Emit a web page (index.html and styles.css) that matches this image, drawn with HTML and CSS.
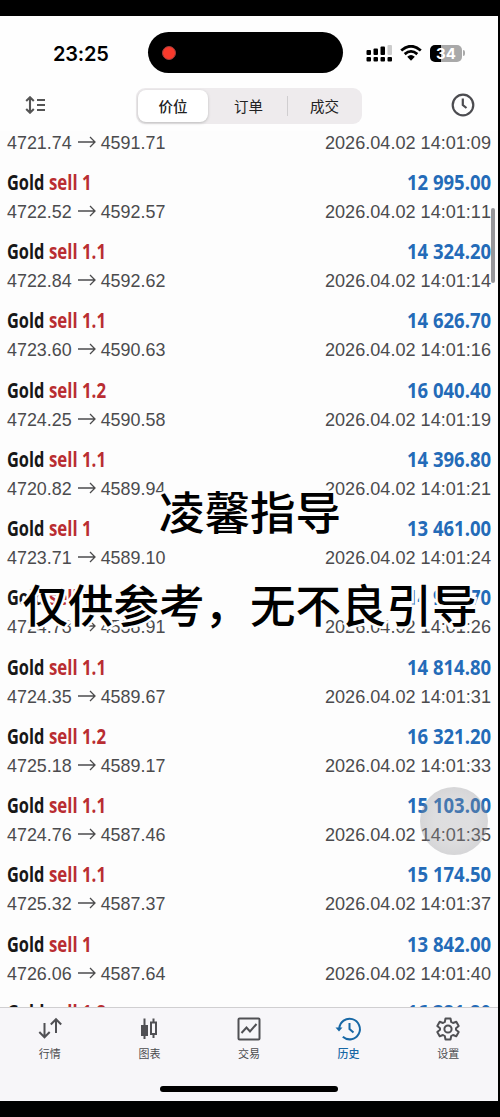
FILE: index.html
```
<!DOCTYPE html>
<html lang="zh-CN">
<head>
<meta charset="utf-8">
<title>历史</title>
<link rel="stylesheet" href="styles.css">
</head>
<body>
<div class="screen">
  <header class="status">
    <div class="time">23:25</div>
    <div class="island"><span class="rec"></span></div>
    <div class="signals">
      <svg class="cell" width="26" height="18" viewBox="0 0 26 18"><rect x="0.500" y="6" width="4.500" height="5" rx="1"/><rect x="7.500" y="4.500" width="4.500" height="6.500" rx="1"/><rect x="14.500" y="2.500" width="4.500" height="8.500" rx="1"/><rect x="21.500" y="1" width="4.500" height="10" rx="1" fill="#ccc"/><rect x="0.500" y="13" width="4.500" height="4.500" rx="1"/><rect x="7.500" y="13" width="4.500" height="4.500" rx="1"/><rect x="14.500" y="13" width="4.500" height="4.500" rx="1"/><rect x="21.500" y="13" width="4.500" height="4.500" rx="1"/></svg>
      <svg class="wifi" width="22" height="16" viewBox="0 0 22 16"><path d="M1.200 5.500Q11-3 20.800 5.500M4.700 9.100Q11 3.700 17.300 9.100" fill="none" stroke="#000" stroke-width="2.800"/><path d="M7.200 11.700Q11 8.500 14.800 11.700L11 15.800Z"/></svg>
      <div class="battery"><span>34</span></div><i class="nub"></i>
    </div>
  </header>
  <nav class="toolbar">
    <svg class="sort" width="21" height="18" viewBox="0 0 21 18"><path d="M5 2V16M1.200 5L5 1.300L8.800 5M1.200 13L5 16.700L8.800 13M12 4H20M12 9H20M12 14H20"/></svg>
    <div class="segments"><span class="seg on">价位</span><span class="seg">订单</span><span class="seg last">成交</span></div>
    <svg class="clock" width="24" height="24" viewBox="0 0 24 24"><circle cx="12" cy="12" r="10.300"/><path d="M11.800 5.500V12L15.500 15"/></svg>
  </nav>
  <main class="list" id="list"></main>
  <footer class="tabs">
    <div class="tab"><svg viewBox="0 0 24 24"><path d="M6.500 6V20M1.300 15L6.500 20.300L11.700 15M18 16V2.500M12.800 7.500L18 2.200L23.200 7.500"/></svg><span>行情</span></div>
    <div class="tab"><svg viewBox="0 0 24 24"><path d="M7.500 1.500V22M16.500 1.500V5M16.500 17V21"/><rect x="5" y="9" width="5" height="9" fill="#505054"/><rect x="14" y="5.500" width="5" height="11.500"/></svg><span>图表</span></div>
    <div class="tab"><svg viewBox="0 0 24 24"><rect x="1.500" y="1.500" width="21" height="21" rx="1"/><path d="M4.500 16L9.500 10.500L13 14.500L19.500 7"/></svg><span>交易</span></div>
    <div class="tab active"><svg viewBox="0 0 24 24"><path d="M2.300 11.500A10.300 10.300 0 1 1 5.800 19.800"/><path class="tip" d="M-1.500 10.500H5.500L2 14.500Z"/><path d="M12.500 6V12L16.500 15.500"/></svg><span>历史</span></div>
    <div class="tab"><svg viewBox="0 0 24 24"><path stroke-linejoin="round" d="M9.500 1.500H14.500L15.200 5L17 6L20.300 4.800L22.700 9L20 11.200V12.800L22.700 15L20.300 19.200L17 18L15.200 19L14.500 22.500H9.500L8.800 19L7 18L3.700 19.200L1.300 15L4 12.800V11.200L1.300 9L3.700 4.800L7 6L8.800 5Z"/><circle cx="12" cy="12" r="3.600"/></svg><span>设置</span></div>
    <div class="home"></div>
  </footer>
  <div class="scrollbar"></div>
  <div class="touch"></div>
  <div class="caption"><p>凌馨指导</p><p>仅供参考，无不良引导</p></div>
</div>
<script src="script.js"></script>
</body>
</html>
```
FILE: styles.css
```
* { box-sizing: border-box; }
body { margin: 0; background: #000; font-family: "Liberation Sans", "Noto Sans CJK SC", sans-serif; }
.screen { position: relative; width: 500px; height: 1117px; padding: 16px 2px 16px 0; display: flex; flex-direction: column; overflow: hidden; background: #000; }
.status { height: 69px; flex: none; background: #fefefe; display: flex; align-items: flex-start; padding-top: 16px; }
.time { width: 148px; padding: 7px 0 0 53px; font: 600 20px/30px Inter, sans-serif; letter-spacing: -.2px; }
.island { width: 195px; height: 41px; border-radius: 21px; background: #000; padding: 14px; }
.rec { display: block; width: 14px; height: 14px; border-radius: 50%; background: #f83a2c; border: 1px solid #9b3e3c; }
.signals { display: flex; align-items: center; padding: 12px 0 0 23px; }
.wifi { margin-left: 8px; }
.battery { margin-left: 8px; width: 32px; height: 17px; border-radius: 5px; background: linear-gradient(90deg, #000 35%, #a9a9a9 35%); color: #fff; font: 700 15px/17px Inter, sans-serif; text-align: center; }
.nub { width: 2px; height: 6px; margin-left: 1px; border-radius: 0 2px 2px 0; background: #aaa; }
.toolbar { height: 46px; flex: none; background: #fefefe; display: flex; align-items: flex-start; }
.sort { margin: 11px 0 0 25px; fill: none; stroke: #555; stroke-width: 2.1; }
.segments { margin: 3px 0 0 90px; width: 226px; height: 36px; border-radius: 9px; background: #eeebed; padding: 2px; display: flex; }
.seg { flex: none; width: 77px; font: 400 14.5px/31px "Noto Sans CJK SC", sans-serif; color: #222; text-align: center; }
.seg.on { width: 70px; font-weight: 500; background: #fff; border-radius: 8px; box-shadow: 0 1px 3px #bbb; margin-right: 2px; }
.seg.last { width: 75px; background: linear-gradient(#d0ced0, #d0ced0) 0 6px / 1px 20px no-repeat; }
.clock { margin: 8px 0 0 89px; fill: none; stroke: #4c4c50; stroke-width: 2.2; }
.list { height: 876px; flex: none; background: #fdfdfd; overflow: hidden; display: flex; flex-direction: column; }
.row { height: 69.25px; flex: none; padding: 5px 7px 0; }
.row.cut { height: 29.8px; padding-top: 0; }
.row.cut .detail { margin-top: -1px; }
.row.next { padding-top: 4px; }
.line { display: flex; justify-content: space-between; }
.head { height: 33px; font: 600 22px/31px "Open Sans", sans-serif; white-space: nowrap; }
.name { width: 42px; color: #171717; }
.side { flex: 1; color: #b92d32; }
.name b, .side b, .profit b { display: inline-block; font-weight: 700; transform-origin: left; }
.name b { transform: scaleX(.745); }
.side b { transform: scaleX(.765); }
.profit { color: #246bb8; }
.profit b { transform: scaleX(.84); transform-origin: right; }
.detail { height: 26px; font-size: 18.1px; line-height: 26px; color: #4b4b4d; white-space: nowrap; font-kerning: none; }
.prices { display: flex; font-size: 17.9px; }
.arrow { width: 18px; height: 12px; margin: 6px 5px 0 6px; fill: none; stroke: #4b4b4d; stroke-width: 1.3; }
.tabs { position: relative; height: 94px; flex: none; background: #f7f6f9; border-top: 1px solid #d0cfd1; display: flex; padding: 9px 0 0; }
.tab { width: 99.7px; display: flex; flex-direction: column; align-items: center; font: 400 11px/16px "Noto Sans CJK SC", sans-serif; color: #4b4b4e; }
.tab svg { width: 24px; height: 24px; overflow: visible; fill: none; stroke: #505054; stroke-width: 2; margin-bottom: 4px; }
.tab.active { color: #1767a5; font-weight: 500; }
.tab.active svg { stroke: #1767a5; }
.tab .tip { fill: #1767a5; stroke: none; }
.home { position: absolute; left: 160px; top: 78px; width: 178px; height: 6px; border-radius: 3px; background: #000; }
.scrollbar { position: absolute; left: 491px; top: 208px; width: 4px; height: 75px; border-radius: 2px; background: #96969a; }
.touch { position: absolute; left: 420px; top: 787px; width: 68px; height: 68px; border-radius: 50%; background: radial-gradient(rgba(150,150,155,.3) 40%, rgba(135,135,140,.4)); }
.caption { position: absolute; left: 0; top: 464px; width: 500px; text-align: center; color: #000; font: 500 45.5px/93px "Noto Sans CJK SC", sans-serif; white-space: nowrap; -webkit-text-stroke: 5px #fdfdfd; paint-order: stroke fill; }
.caption p { margin: 0; }
```
FILE: script.js
```
const trades = [
  ["1", "12 995.00", "4722.52", "4592.57", "11"],
  ["1.1", "14 324.20", "4722.84", "4592.62", "14"],
  ["1.1", "14 626.70", "4723.60", "4590.63", "16"],
  ["1.2", "16 040.40", "4724.25", "4590.58", "19"],
  ["1.1", "14 396.80", "4720.82", "4589.94", "21"],
  ["1", "13 461.00", "4723.71", "4589.10", "24"],
  ["1.1", "14 945.70", "4724.78", "4588.91", "26"],
  ["1.1", "14 814.80", "4724.35", "4589.67", "31"],
  ["1.2", "16 321.20", "4725.18", "4589.17", "33"],
  ["1.1", "15 103.00", "4724.76", "4587.46", "35"],
  ["1.1", "15 174.50", "4725.32", "4587.37", "37"],
  ["1", "13 842.00", "4726.06", "4587.64", "40"],
];
const head = (size, profit) => `<div class="line head"><span class="name"><b>Gold</b></span><span class="side"><b>sell ${size}</b></span><span class="profit"><b>${profit}</b></span></div>`;
const detail = (open, close, sec) => `<div class="line detail"><span class="prices">${open}<svg class="arrow" viewBox="0 0 18 12"><path d="M0 6H17M12 1L17 6L12 11"/></svg>${close}</span><span>2026.04.02 14:01:${sec}</span></div>`;
document.getElementById("list").innerHTML =
  `<div class="row cut">${detail("4721.74", "4591.71", "09")}</div>` +
  trades.map(([size, profit, open, close, sec]) => `<div class="row">${head(size, profit)}${detail(open, close, sec)}</div>`).join("") +
  `<div class="row next">${head("1.2", "16 321.20")}</div>`;
```
